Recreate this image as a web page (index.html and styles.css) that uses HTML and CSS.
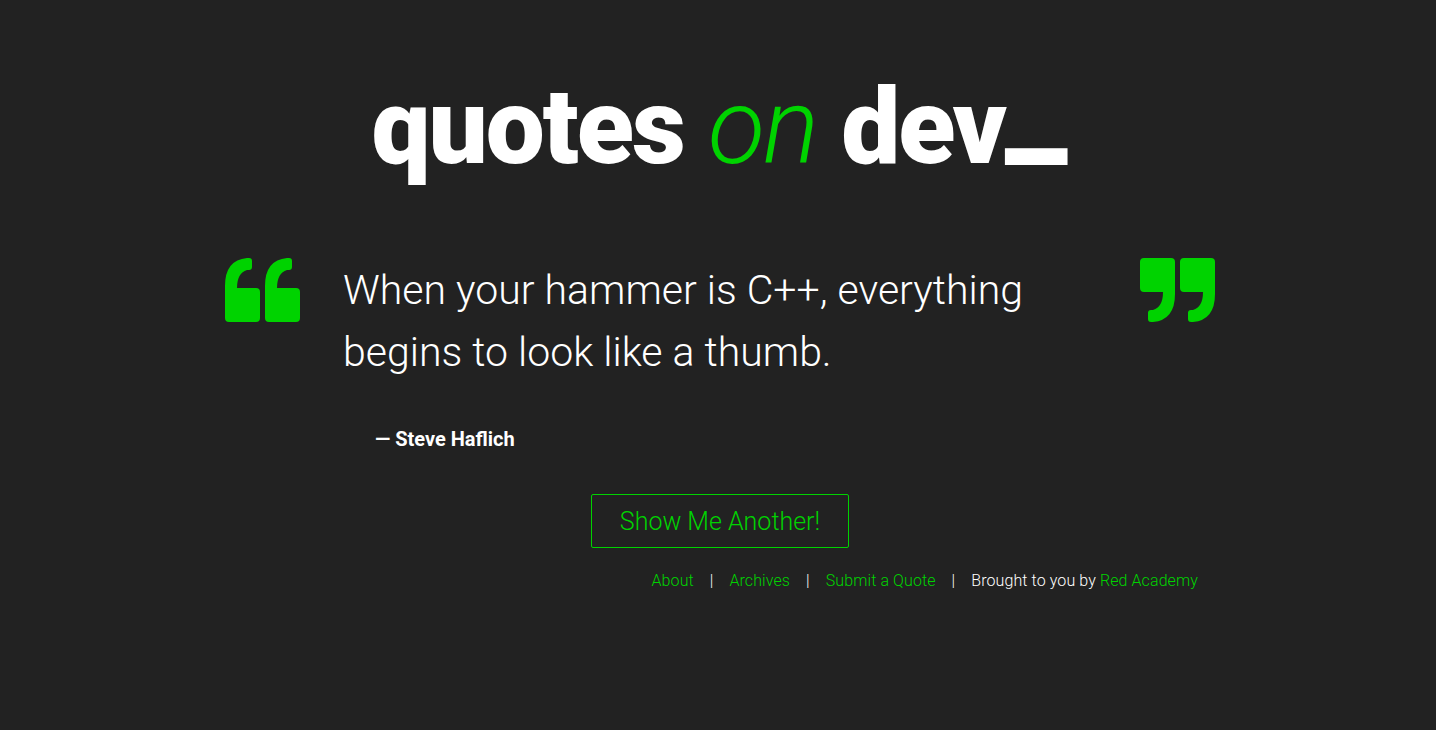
FILE: index.html
```html
<!DOCTYPE html>
<html lang="en">
<head>
<meta charset="utf-8">
<title>Quotes on Dev</title>
<link rel="stylesheet" href="styles.css">
</head>
<body>
<div class="page">
  <header class="site-header">
    <h1 class="site-title">quotes <span class="on">on</span> dev<span class="cursor">_</span></h1>
  </header>
  <main class="main">
    <div class="quote-row">
      <svg class="mark mark-open" viewBox="0 0 76 64" width="76" height="64" aria-hidden="true">
        <path d="M4 64H31Q35 64 35 60V34Q35 30 31 30H12Q12 15 22 12H24Q27 12 27 9V3Q27 0 24 0H22Q0 2 0 28V60Q0 64 4 64Z"/>
        <path transform="translate(40 0)" d="M4 64H31Q35 64 35 60V34Q35 30 31 30H12Q12 15 22 12H24Q27 12 27 9V3Q27 0 24 0H22Q0 2 0 28V60Q0 64 4 64Z"/>
      </svg>
      <div class="quote-body">
        <p class="quote-text">When your hammer is C++, everything begins to look like a thumb.</p>
        <p class="quote-author">— Steve Haflich</p>
      </div>
      <svg class="mark mark-close" viewBox="0 0 76 64" width="76" height="64" aria-hidden="true">
        <path d="M4 64H31Q35 64 35 60V34Q35 30 31 30H12Q12 15 22 12H24Q27 12 27 9V3Q27 0 24 0H22Q0 2 0 28V60Q0 64 4 64Z"/>
        <path transform="translate(40 0)" d="M4 64H31Q35 64 35 60V34Q35 30 31 30H12Q12 15 22 12H24Q27 12 27 9V3Q27 0 24 0H22Q0 2 0 28V60Q0 64 4 64Z"/>
      </svg>
    </div>
    <div class="actions">
      <button class="btn-another" type="button">Show Me Another!</button>
    </div>
  </main>
  <footer class="site-footer">
    <a href="#" class="f-link">About</a>
    <span class="sep">|</span>
    <a href="#" class="f-link">Archives</a>
    <span class="sep">|</span>
    <a href="#" class="f-link">Submit a Quote</a>
    <span class="sep">|</span>
    <span class="credit">Brought to you by <a href="#" class="f-link">Red Academy</a></span>
  </footer>
</div>
</body>
</html>
```

FILE: styles.css
```css
* { box-sizing: border-box; }
html, body {
  margin: 0;
  padding: 0;
  background: #222222;
  color: #ffffff;
  font-family: Roboto, "Liberation Sans", sans-serif;
}
.page {
  width: 994px;
  margin: 0 auto;
  padding-top: 75px;
  padding-left: 4px;
  min-height: 730px;
}
.site-header { text-align: center; }
.site-title {
  margin: 0;
  font-size: 105px;
  line-height: 1;
  font-weight: 900;
  letter-spacing: -2px;
  color: #ffffff;
}
.site-title .on {
  font-weight: 300;
  font-style: italic;
  color: #00d300;
}
.site-title .cursor {
  display: inline-block;
  transform: translateY(-10px) scale(1.35, 1.3);
  transform-origin: left bottom;
  margin-right: 19px;
}
.main { margin-top: 78px; }
.quote-row {
  display: flex;
  align-items: flex-start;
}
.mark { fill: #00d300; flex: none; }
.mark-close { transform: rotate(180deg); margin-left: auto; }
.quote-body {
  margin-left: 42px;
  margin-top: 1px;
  width: 760px;
}
.quote-text {
  margin: 0;
  font-size: 41px;
  line-height: 62px;
  font-weight: 300;
}
.quote-author {
  margin: 44px 0 0 32px;
  font-size: 20px;
  line-height: 24px;
  font-weight: 700;
}
.actions {
  display: flex;
  justify-content: center;
  margin-top: 43px;
}
.btn-another {
  width: 258px;
  height: 54px;
  background: transparent;
  border: 1px solid #00d300;
  border-radius: 2px;
  color: #00d300;
  font-family: inherit;
  font-size: 25px;
  font-weight: 300;
  padding: 0;
}
.site-footer {
  display: flex;
  justify-content: flex-end;
  align-items: baseline;
  margin-top: 23px;
  padding-right: 17px;
  font-size: 16px;
  line-height: 20px;
  font-weight: 300;
  letter-spacing: 0.1px;
}
.f-link { color: #00d300; text-decoration: none; }
.sep { margin: 0 16px; color: #ffffff; }
.credit { color: #ffffff; }
```
